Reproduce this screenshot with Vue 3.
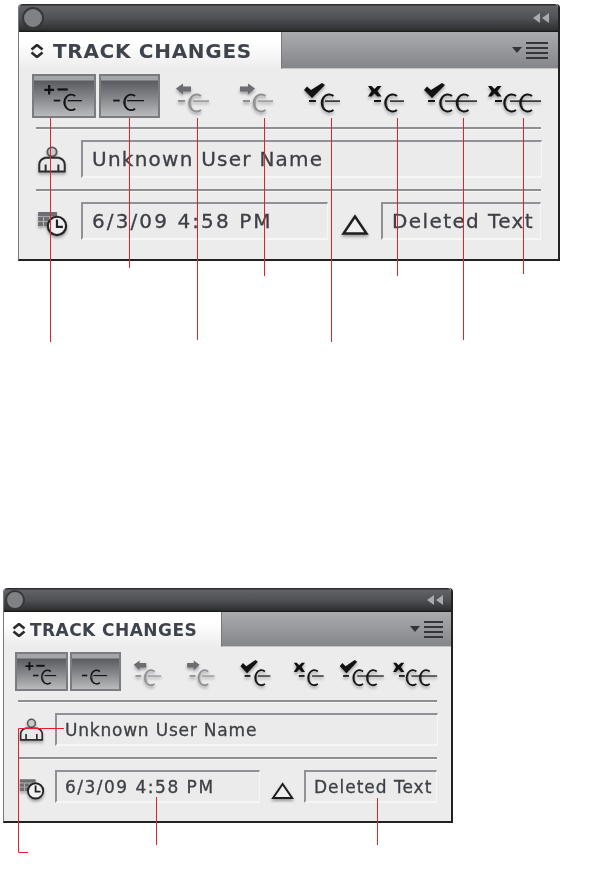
<template>
  <div class="page">
    <div v-for="p in panels" :key="p.id" class="panel" :class="p.id">
      <div class="titlebar">
        <span class="close-btn"></span>
        <span class="collapse"><i></i><i></i></span>
      </div>
      <div class="tabs">
        <div class="tab">
          <svg class="updown" viewBox="0 0 14 14"><path d="M1.500 5.500 7 1l5.500 4.500M1.500 8.500 7 13l5.500-4.500" fill="none" stroke="#2b2b2e" stroke-width="2.600" /></svg>
          <span class="tab-label">TRACK CHANGES</span>
        </div>
        <div class="tab-rest">
          <span class="menu-arrow"></span>
          <span class="menu-lines"><i></i><i></i><i></i><i></i></span>
        </div>
      </div>
      <div class="toolbar">
        <div
          v-for="t in tools"
          :key="t.x"
          class="tool"
          :class="{ pressed: t.pressed, dim: t.dim }"
          :style="{ '--w': t.w }"
        >
          <svg :viewBox="`${t.x} 74 ${t.w} 44`" preserveAspectRatio="none">
            <g v-if="t.lead === 'plus'" fill="#111">
              <path d="M47 84h2.400v4h4v2.400h-4v4H47v-4h-4V88h4z" />
              <rect x="57" y="87.600" width="11" height="2.400" />
            </g>
            <path v-if="t.lead === 'left'" :d="`M${t.lx} 88.500 l7 -5 v3 h8 v5 h-8 v3 z`" fill="#6b6d71" />
            <path v-if="t.lead === 'right'" :d="`M${t.lx + 15} 88.500 l-7 -5 v3 h-8 v5 h8 v3 z`" fill="#6b6d71" />
            <path v-if="t.lead === 'check'" :d="`M${t.lx} 90 l3 -3.500 l4 3.500 l11 -7 l3 2 l-13 13 z`" fill="#111" />
            <path v-if="t.lead === 'x'" :d="`M${t.lx} 86 h3.500 l3 3 l3 -3 h4 l-4 5 l4 5.500 h-4 l-3 -3 l-3 3 h-3.500 l3.500 -5.500 z`" fill="#111" />
            <rect :x="t.dash" y="100" width="7" height="2" class="ink" />
            <g v-for="c in t.cs" :key="c">
              <path :d="`M${c + 6} 96 A7.500 8.500 0 1 0 ${c + 6} 110`" fill="none" class="ink-line" stroke-width="2" />
              <path :d="`M${c} 95 A7 8.500 0 0 0 ${c} 111 A4 8 0 0 1 ${c} 95 z`" class="ink" />
            </g>
            <rect :x="t.s1" y="100.400" :width="t.s2 - t.s1" height="1.400" class="ink" />
          </svg>
        </div>
      </div>
      <div class="rule"></div>
      <div class="row">
        <div class="row-icon">
          <svg class="user-icon" viewBox="0 0 30 28">
            <circle cx="15" cy="6" r="4.700" fill="#c9cacc" stroke="#55565a" stroke-width="1.800" />
            <path d="M2 26v-7c0-4 3-6 6-7h14c3 1 6 3 6 7v7z" fill="#e8e8e8" stroke="#2c2c2f" stroke-width="2" />
            <path d="M8.500 19v7M21.500 19v7" stroke="#2c2c2f" stroke-width="2" />
          </svg>
        </div>
        <div class="field wide">{{ userName }}</div>
      </div>
      <div class="rule second"></div>
      <div class="row last">
        <div class="row-icon">
          <svg class="clock-icon" viewBox="0 0 32 26">
            <path d="M1 1h19v4H1zM1 6h5v4H1zM7 6h5v4H7zM13 6h5v4h-5zM1 11h5v4H1zM7 11h5v4H7z" fill="#6c6e73" />
            <circle cx="20" cy="15" r="9.200" fill="#f0f0f0" stroke="#232326" stroke-width="2.200" />
            <path d="M20 8.500V16h6" fill="none" stroke="#232326" stroke-width="2.200" />
          </svg>
        </div>
        <div class="field date">6/3/09 4:58 PM</div>
        <div class="delta">
          <svg viewBox="0 0 28 22"><path d="M14 2.500 25.500 19.500h-23z" fill="#f0f0f0" stroke="#1e1e20" stroke-width="2.400" /></svg>
        </div>
        <div class="field kind">Deleted Text</div>
      </div>
    </div>

    <svg class="callouts" viewBox="0 0 599 892" width="599" height="892">
      <g fill="none" stroke="#e5202a" stroke-width="1">
        <path v-for="d in callouts" :key="d" :d="d" />
      </g>
    </svg>
  </div>
</template>

<script setup>
const userName = 'Unknown User Name'
const panels = [{ id: 'large' }, { id: 'small' }]

// x and widths are measured on the large panel, page coordinates
const tools = [
  { x: 32, w: 64, pressed: true, lead: 'plus', dash: 53, cs: [70], s1: 68, s2: 83 },
  { x: 99, w: 61, pressed: true, dash: 112, cs: [129.500], s1: 127, s2: 145 },
  { x: 163, w: 66, dim: true, lead: 'left', lx: 176, dash: 178, cs: [195], s1: 193, s2: 209 },
  { x: 229, w: 66, dim: true, lead: 'right', lx: 240, dash: 243, cs: [259.500], s1: 258, s2: 273 },
  { x: 295, w: 66, lead: 'check', lx: 304, dash: 309, cs: [327.500], s1: 325, s2: 340 },
  { x: 361, w: 56, lead: 'x', lx: 368, dash: 374, cs: [391], s1: 390, s2: 404 },
  { x: 417, w: 66, lead: 'check', lx: 424, dash: 428, cs: [446, 462.500], s1: 445, s2: 477 },
  { x: 483, w: 60, lead: 'x', lx: 488, dash: 495, cs: [510, 526], s1: 510, s2: 541 }
]

const callouts = [
  'M50.500 118V342',
  'M129.500 118V268',
  'M197.500 118V340',
  'M264.500 118V276',
  'M331.500 118V342',
  'M397.500 118V276',
  'M463.500 118V340',
  'M523.500 118V274',
  'M64 728.500H18.500V852.500H28',
  'M156.500 797V845',
  'M377.500 798V845'
]
</script>

<style>
html, body { margin: 0; background: #fff; }
</style>

<style scoped>
.page { position: relative; width: 599px; height: 892px; overflow: hidden; padding-top: 4px; box-sizing: border-box; font-family: "DejaVu Sans", sans-serif; }

.panel { box-sizing: border-box; width: calc(542px * var(--sx)); border-left: 1px solid #77797c; border-right: 2px solid #222; border-bottom: 2px solid #222; background: #ececec; border-radius: 4px 4px 0 0; filter: blur(0.6px); }
.large { --sx: 1; --title: 28px; --tabs: 37px; --btn: 44px; --field: 38px; --row-gap: 11px; --foot: 19px; --fs: 20px; --ls: 1.25px; --date-ls: 2.1px; --kind-ls: 1.4px; --tab-fs: 20px; --tab-ls: 0.7px; --tab-pad: 11px; --tab-gap: 9px; --circle: 22px; --circle-left: 3px; margin-left: 18px; }
.small { --sx: 0.83; --title: 24px; --tabs: 35px; --btn: 39px; --field: 33px; --row-gap: 11px; --foot: 18px; --fs: 17px; --ls: 0.8px; --date-ls: 1.5px; --kind-ls: 1px; --tab-fs: 17px; --tab-ls: 0.45px; --tab-pad: 8px; --tab-gap: 4px; --circle: 20px; --circle-left: 1px; margin-left: 3px; margin-top: 327px; }

.titlebar { box-sizing: border-box; height: var(--title); display: flex; align-items: center; justify-content: space-between; padding: 0 calc(9px * var(--sx)) 0 var(--circle-left); background: linear-gradient(#2b2c2e 0, #2b2c2e 1px, #626367 2px, #505155 50%, #2f3032 calc(100% - 2px), #141414 100%); border-radius: 4px 4px 0 0; }
.close-btn { width: var(--circle); height: var(--circle); box-sizing: border-box; border-radius: 50%; background: #7f8185; border: 2px solid #36373a; }
.collapse { display: flex; gap: 2px; }
.collapse i { width: 0; height: 0; border-style: solid; border-width: 5px 7px 5px 0; border-color: transparent #a8aaad transparent transparent; }

.tabs { display: flex; height: var(--tabs); }
.tab { box-sizing: border-box; width: calc(262px * var(--sx)); display: flex; align-items: center; gap: var(--tab-gap); padding-left: var(--tab-pad); background: linear-gradient(#fff 30%, #ececec 100%); }
.updown { width: 14px; height: 14px; flex: none; }
.tab-label { font-size: var(--tab-fs); font-weight: 700; letter-spacing: var(--tab-ls); color: #3f434b; white-space: nowrap; }
.tab-rest { flex: 1; display: flex; align-items: center; justify-content: flex-end; gap: 4px; padding-right: calc(10px * var(--sx)); background: linear-gradient(#a9abaf, #84868a); border-left: 1px solid #77797c; border-bottom: 1px solid #c3c4c6; }
.menu-arrow { width: 0; height: 0; border-style: solid; border-width: 6px 5.500px 0; border-color: #33353a transparent transparent; }
.menu-lines { display: flex; flex-direction: column; gap: 3px; width: calc(22px * var(--sx)); }
.menu-lines i { height: 2px; background: #33353a; }

.toolbar { display: flex; padding: 5px 0 0 calc(13px * var(--sx)); }
.tool { box-sizing: border-box; height: var(--btn); width: calc(var(--w) * 1px * var(--sx)); flex: none; }
.tool svg { display: block; width: 100%; height: 100%; overflow: visible; filter: blur(0.35px) drop-shadow(0 2px 1.500px rgba(0, 0, 0, 0.35)); }
.tool.pressed { background: linear-gradient(#a3a5a8 0, #a3a5a8 4px, #5a5c61 5px, #85878b 55%, #b9babc 100%); border: 2px solid #7a7c80; margin-right: calc(3px * var(--sx)); }
.tool.pressed svg { filter: blur(0.35px); }
.ink { fill: #141416; }
.ink-line { stroke: #141416; }
.dim .ink { fill: #8e9094; }
.dim .ink-line { stroke: #8e9094; }

.rule { height: 2px; background: #8d8f93; margin: 9px calc(17px * var(--sx)) 0; box-shadow: 0 1px 0 #f7f7f7; }
.rule.second { margin-top: var(--row-gap); }
.row { display: flex; align-items: center; margin-top: var(--row-gap); padding-left: calc(62px * var(--sx)); position: relative; }
.row.last { margin-bottom: var(--foot); }
.row-icon { position: absolute; left: calc(18px * var(--sx)); top: 16%; display: flex; }
.user-icon { width: calc(30px * var(--sx)); height: calc(var(--field) * 0.72); filter: drop-shadow(0 2px 1.500px rgba(0, 0, 0, 0.3)); }
.clock-icon { width: calc(32px * var(--sx)); height: calc(var(--field) * 0.68); margin-top: 3px; filter: drop-shadow(0 2px 1.500px rgba(0, 0, 0, 0.35)); }

.field { box-sizing: border-box; height: var(--field); display: flex; align-items: center; padding-left: calc(9px * var(--sx)); border-top: 2px solid #8f9196; border-left: 2px solid #8f9196; border-right: 1px solid #f6f6f6; border-bottom: 2px solid #f6f6f6; background: #ebebeb; color: #3e4046; font-size: var(--fs); letter-spacing: var(--ls); -webkit-text-stroke: 0.3px #3e4046; white-space: nowrap; overflow: hidden; }
.wide { width: calc(461px * var(--sx)); }
.date { width: calc(247px * var(--sx)); letter-spacing: var(--date-ls); }
.kind { width: calc(160px * var(--sx)); letter-spacing: var(--kind-ls); }
.delta { width: calc(53px * var(--sx)); display: flex; justify-content: center; }
.delta svg { width: calc(28px * var(--sx)); height: 22px; margin-top: 8px; filter: drop-shadow(0 2px 1.500px rgba(0, 0, 0, 0.35)); }

.callouts { position: absolute; left: 0; top: 0; pointer-events: none; }
</style>
